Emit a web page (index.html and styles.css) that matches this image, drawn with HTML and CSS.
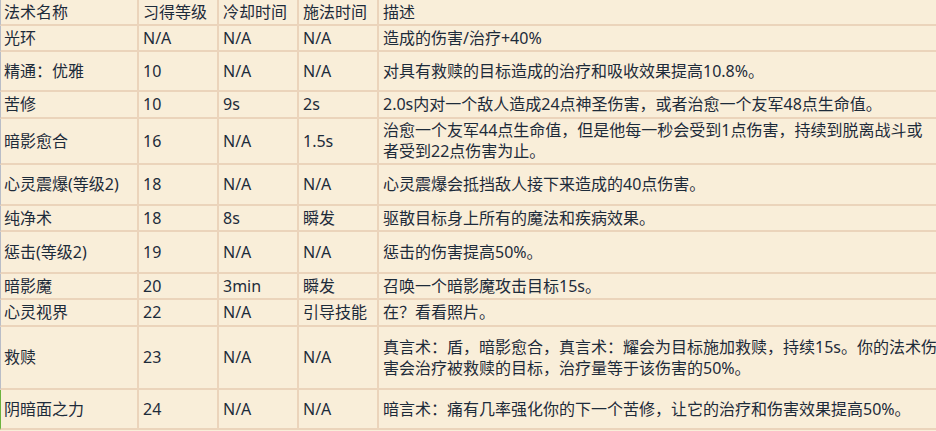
FILE: index.html
```html
<!DOCTYPE html>
<html lang="zh-CN">
<head>
<meta charset="utf-8">
<title>法术</title>
<link rel="stylesheet" href="styles.css">
</head>
<body>
<div class="frame">
<table class="spells">
  <colgroup>
    <col class="c-name"><col class="c-num"><col class="c-num"><col class="c-num"><col class="c-desc">
  </colgroup>
  <thead>
    <tr class="r24"><th>法术名称</th><th>习得等级</th><th>冷却时间</th><th>施法时间</th><th>描述</th></tr>
  </thead>
  <tbody>
    <tr class="r24"><td>光环</td><td>N/A</td><td>N/A</td><td>N/A</td><td>造成的伤害/治疗+40%</td></tr>
    <tr class="r38"><td>精通：优雅</td><td>10</td><td>N/A</td><td>N/A</td><td>对具有救赎的目标造成的治疗和吸收效果提高10.8%。</td></tr>
    <tr class="r25"><td>苦修</td><td>10</td><td>9s</td><td>2s</td><td>2.0s内对一个敌人造成24点神圣伤害，或者治愈一个友军48点生命值。</td></tr>
    <tr class="r44"><td>暗影愈合</td><td>16</td><td>N/A</td><td>1.5s</td><td>治愈一个友军44点生命值，但是他每一秒会受到1点伤害，持续到脱离战斗或<br>者受到22点伤害为止。</td></tr>
    <tr class="r39"><td>心灵震爆(等级2)</td><td>18</td><td>N/A</td><td>N/A</td><td>心灵震爆会抵挡敌人接下来造成的40点伤害。</td></tr>
    <tr class="r24"><td>纯净术</td><td>18</td><td>8s</td><td>瞬发</td><td>驱散目标身上所有的魔法和疾病效果。</td></tr>
    <tr class="r40"><td>惩击(等级2)</td><td>19</td><td>N/A</td><td>N/A</td><td>惩击的伤害提高50%。</td></tr>
    <tr class="r24"><td>暗影魔</td><td>20</td><td>3min</td><td>瞬发</td><td>召唤一个暗影魔攻击目标15s。</td></tr>
    <tr class="r25"><td>心灵视界</td><td>22</td><td>N/A</td><td>引导技能</td><td>在？看看照片。</td></tr>
    <tr class="r61"><td>救赎</td><td>23</td><td>N/A</td><td>N/A</td><td>真言术：盾，暗影愈合，真言术：耀会为目标施加救赎，持续15s。你的法术伤<br>害会治疗被救赎的目标，治疗量等于该伤害的50%。</td></tr>
    <tr class="r38 active"><td>阴暗面之力</td><td>24</td><td>N/A</td><td>N/A</td><td>暗言术：痛有几率强化你的下一个苦修，让它的治疗和伤害效果提高50%。</td></tr>
  </tbody>
</table>
</div>
</body>
</html>
```

FILE: styles.css
```css
html, body {
  margin: 0;
  padding: 0;
  background: #f9eed9;
}
.frame {
  width: 936px;
  height: 431px;
  overflow: hidden;
}
.spells {
  border-collapse: separate;
  border-spacing: 0;
  table-layout: fixed;
  width: 960px;
  background: #f9eed9;
  color: #1d2b3a;
  font-family: "Noto Sans", "Noto Sans CJK SC", sans-serif;
  font-size: 16px;
  line-height: 21px;
}
.c-name { width: 139px; }
.c-num { width: 80px; }
.c-desc { width: 581px; }
.spells th,
.spells td {
  font-weight: normal;
  text-align: left;
  vertical-align: middle;
  padding: 0 4px;
  border-right: 2px solid #ebd4bb;
  border-bottom: 2px solid #ebd4bb;
  white-space: nowrap;
  overflow: hidden;
}
.spells th:first-child,
.spells td:first-child {
  border-left: 1px solid #b9bdc7;
  padding-left: 3px;
}
.spells tr.active td:first-child {
  border-left-color: #6cb33e;
}
.r24 { height: 26px; }
.r25 { height: 27px; }
.r38 { height: 40px; }
.r39 { height: 41px; }
.r40 { height: 42px; }
.r44 { height: 46px; }
.r61 { height: 63px; }
```
